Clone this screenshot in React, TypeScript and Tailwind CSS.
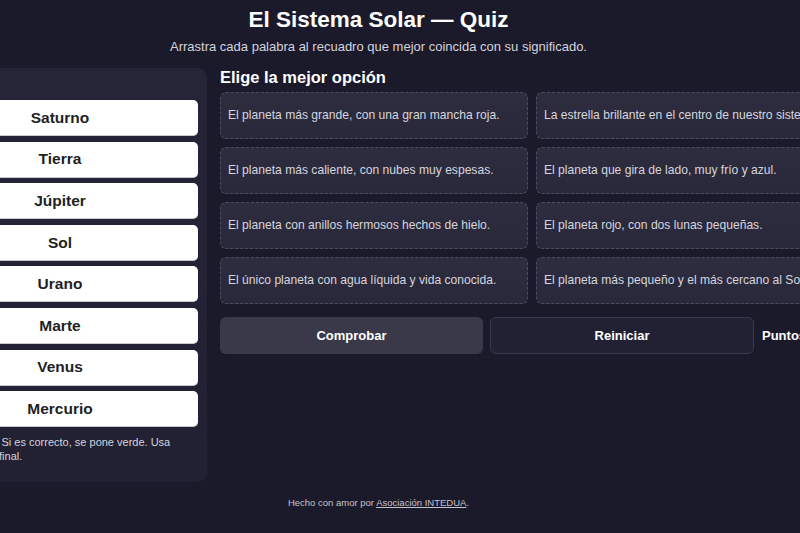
import React from "react";

const words = ["Saturno", "Tierra", "Júpiter", "Sol", "Urano", "Marte", "Venus", "Mercurio"];

const clues = [
  "El planeta más grande, con una gran mancha roja.",
  "La estrella brillante en el centro de nuestro sistema solar.",
  "El planeta más caliente, con nubes muy espesas.",
  "El planeta que gira de lado, muy frío y azul.",
  "El planeta con anillos hermosos hechos de hielo.",
  "El planeta rojo, con dos lunas pequeñas.",
  "El único planeta con agua líquida y vida conocida.",
  "El planeta más pequeño y el más cercano al Sol.",
];

export default function App() {
  return (
    <div className="min-h-[533px] w-[800px] overflow-hidden bg-[#1b1a2b] font-['Liberation_Sans',Arial,sans-serif] text-white">
      <div className="ml-[-87px] w-[931px]">
        {/* Header */}
        <header className="pt-[6px] text-center">
          <h1 className="text-[22.5px] font-bold leading-[28px]">El Sistema Solar — Quiz</h1>
          <p className="mt-[4px] text-[13px] leading-[18px] text-[#d4d3dc]">
            Arrastra cada palabra al recuadro que mejor coincida con su significado.
          </p>
        </header>

        <main className="mt-[12px] flex gap-[13px]">
          {/* Word bank */}
          <aside className="w-[294px] shrink-0 rounded-[10px] bg-gradient-to-b from-[#262537] to-[#222133] px-[9px] pb-[19px] pt-[32px]">
            <div className="flex flex-col gap-[5.6px]">
              {words.map((w) => (
                <div
                  key={w}
                  className="flex h-[36px] items-center justify-center rounded-[5px] border-b border-[#c8c8d0] bg-white text-[15.5px] font-bold text-[#1f1f24]"
                >
                  {w}
                </div>
              ))}
            </div>
            <p className="mt-[8px] text-[11px] leading-[14px] text-[#d4d3dc]">
              <span className="block">Toca o arrastra.  Si es correcto, se pone verde. Usa</span>
              <span className="block">“Comprobar” al final.</span>
            </p>
          </aside>

          {/* Targets */}
          <section className="flex-1">
            <h2 className="text-[16.5px] font-bold leading-[19px]">Elige la mejor opción</h2>
            <div className="mt-[5px] grid grid-cols-2 gap-x-[8px] gap-y-[8px]">
              {clues.map((c) => (
                <div
                  key={c}
                  className="flex h-[47px] items-center overflow-hidden whitespace-nowrap rounded-[6px] border border-dashed border-[#4d4c5e] bg-gradient-to-b from-[#2e2d40] to-[#29283a] px-[7px] text-[12.1px] text-[#d6d5de]"
                >
                  {c}
                </div>
              ))}
            </div>
            <div className="mt-[13px] flex items-center gap-[7px]">
              <button className="h-[37px] w-[263px] rounded-[6px] bg-[#3a3949] text-[13px] font-bold text-white">
                Comprobar
              </button>
              <button className="h-[37px] w-[264px] rounded-[6px] border border-[#3a394b] bg-[#222133] text-[13px] font-bold text-white">
                Reiniciar
              </button>
              <span className="ml-[1px] text-[13px] font-bold">Puntos: 0 / 8</span>
            </div>
          </section>
        </main>

        <footer className="mt-[14px] text-center text-[9.5px] text-[#c4c3cc]">
          Hecho con amor por <a className="underline">Asociación INTEDUA</a>.
        </footer>
      </div>
    </div>
  );
}
